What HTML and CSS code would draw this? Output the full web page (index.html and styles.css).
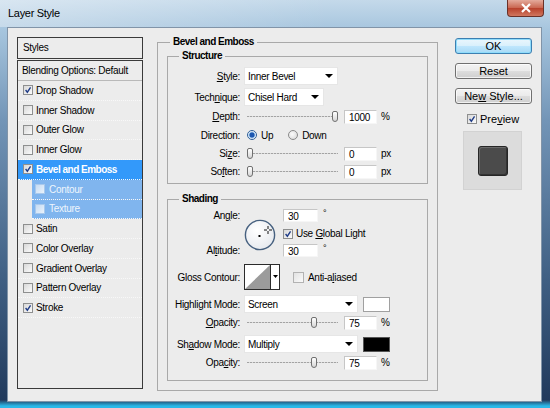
FILE: index.html
```html
<!DOCTYPE html>
<html lang="en">
<head>
  <meta charset="UTF-8">
  <title>Layer Style</title>
  <link rel="stylesheet" href="styles.css">
</head>
<body>

<div class="window">
  <div class="titlebar">
    <span class="title">Layer Style</span>
    <span class="close">
      <svg width="12" height="10" viewBox="0 0 12 10"><path d="M2 1 L10 9 M10 1 L2 9" stroke="#fff" stroke-width="2.2"/></svg>
    </span>
  </div>

  <div class="client">

    <!-- Styles list -->
    <div class="styles">
      <div class="styles-head">Styles</div>
      <div class="styles-body">
        <div class="blend">Blending Options: Default</div>
        <div class="item"><span class="cb"><svg viewBox="0 0 10 10"><path d="M2 5 L4.2 7.8 L8.2 1.8"/></svg></span>Drop Shadow</div>
        <div class="item"><span class="cb"></span>Inner Shadow</div>
        <div class="item"><span class="cb"></span>Outer Glow</div>
        <div class="item"><span class="cb"></span>Inner Glow</div>
        <div class="item active"><span class="cb"><svg viewBox="0 0 10 10"><path d="M2 5 L4.2 7.8 L8.2 1.8"/></svg></span>Bevel and Emboss</div>
        <div class="item sub"><span class="cb"></span>Contour</div>
        <div class="item sub"><span class="cb"></span>Texture</div>
        <div class="item"><span class="cb"></span>Satin</div>
        <div class="item"><span class="cb"></span>Color Overlay</div>
        <div class="item"><span class="cb"></span>Gradient Overlay</div>
        <div class="item"><span class="cb"></span>Pattern Overlay</div>
        <div class="item"><span class="cb"><svg viewBox="0 0 10 10"><path d="M2 5 L4.2 7.8 L8.2 1.8"/></svg></span>Stroke</div>
      </div>
    </div>

    <!-- Bevel and Emboss -->
    <fieldset class="group main">
      <legend>Bevel and Emboss</legend>

      <fieldset class="group structure">
        <legend>Structure</legend>

        <div class="row tall">
          <label><u>S</u>tyle:</label>
          <div class="select w94"><span>Inner Bevel</span><i class="arrow"></i></div>
        </div>
        <div class="row tall">
          <label>Tech<u>n</u>ique:</label>
          <div class="select w80"><span>Chisel Hard</span><i class="arrow"></i></div>
        </div>
        <div class="row">
          <label><u>D</u>epth:</label>
          <div class="slider"><span class="thumb" style="left:85px"></span></div>
          <span class="num">1000</span><span class="unit">%</span>
        </div>
        <div class="row mid">
          <label>Direction:</label>
          <span class="radio on"></span><span class="opt">Up</span>
          <span class="radio down"></span><span class="opt">Down</span>
        </div>
        <div class="row">
          <label>Si<u>z</u>e:</label>
          <div class="slider"><span class="thumb" style="left:0px"></span></div>
          <span class="num">0</span><span class="unit">px</span>
        </div>
        <div class="row">
          <label>So<u>f</u>ten:</label>
          <div class="slider"><span class="thumb" style="left:0px"></span></div>
          <span class="num">0</span><span class="unit">px</span>
        </div>
      </fieldset>

      <fieldset class="group shading">
        <legend>Shading</legend>

        <div class="angle">
          <label class="a1">An<u>g</u>le:</label>
          <div class="dial">
            <svg width="32" height="32" viewBox="0 0 32 32">
              <defs>
                <radialGradient id="dialfill" cx="0.4" cy="0.35" r="0.7">
                  <stop offset="0" stop-color="#ffffff"/>
                  <stop offset="1" stop-color="#e6e9ee"/>
                </radialGradient>
              </defs>
              <circle cx="16" cy="16" r="14.6" fill="url(#dialfill)" stroke="#46607f" stroke-width="1.4"/>
              <rect x="14.5" y="16" width="2" height="2" fill="#000"/>
              <path d="M24 7 V10 M24 12 V15 M20 11 H23 M25 11 H28" stroke="#111" stroke-width="1"/>
            </svg>
          </div>
          <div class="a-val"><span class="num deg">30</span><sup>°</sup></div>
          <div class="a-check"><span class="cb"><svg viewBox="0 0 10 10"><path d="M2 5 L4.2 7.8 L8.2 1.8"/></svg></span><span>Use <u>G</u>lobal Light</span></div>
          <label class="a3">Al<u>t</u>itude:</label>
          <div class="a-val2"><span class="num deg">30</span><sup>°</sup></div>
        </div>

        <div class="row contour-row">
          <label>Gloss Contour:</label>
          <div class="contour">
            <svg width="36" height="26" viewBox="0 0 36 26">
              <rect x="0.5" y="0.5" width="35" height="25" fill="#fff" stroke="#2b2b2b"/>
              <polygon points="1,25 26,1 26,25" fill="#9b9b9b"/>
              <path d="M26.5 0.5 V25.5" stroke="#2b2b2b"/>
              <polygon points="29,11 34,11 31.5,14" fill="#000"/>
            </svg>
          </div>
          <span class="cb light"></span><span class="opt">Anti-a<u>l</u>iased</span>
        </div>

        <div class="row mode">
          <label>Hi<u>g</u>hlight Mode:</label>
          <div class="select w114"><span>Screen</span><i class="arrow"></i></div>
          <span class="swatch white"></span>
        </div>
        <div class="row">
          <label><u>O</u>pacity:</label>
          <div class="slider"><span class="thumb" style="left:64px"></span></div>
          <span class="num">75</span><span class="unit">%</span>
        </div>
        <div class="row mode">
          <label>Sh<u>a</u>dow Mode:</label>
          <div class="select w114"><span>Multiply</span><i class="arrow"></i></div>
          <span class="swatch black"></span>
        </div>
        <div class="row">
          <label>Opa<u>c</u>ity:</label>
          <div class="slider"><span class="thumb" style="left:64px"></span></div>
          <span class="num">75</span><span class="unit">%</span>
        </div>
      </fieldset>
    </fieldset>

    <!-- Buttons and preview -->
    <div class="side">
      <button class="btn default">OK</button>
      <button class="btn">Reset</button>
      <button class="btn">Ne<u>w</u> Style...</button>
      <div class="preview-check"><span class="cb"><svg viewBox="0 0 10 10"><path d="M2 5 L4.2 7.8 L8.2 1.8"/></svg></span><span>Pre<u>v</u>iew</span></div>
      <div class="preview"><div class="swatch-big"></div></div>
    </div>

  </div>
</div>

</body>
</html>
```

FILE: styles.css
```css
* {
  box-sizing: border-box;
}

body {
  margin: 0;
  background: #3e5e82;
  font-family: "Liberation Sans", Arial, sans-serif;
  font-size: 10px;
  letter-spacing: -0.3px;
  color: #000;
}

u {
  text-decoration: underline;
}

/* window frame */
.window {
  width: 550px;
  height: 408px;
  display: flex;
  flex-direction: column;
  background: linear-gradient(to bottom, #c4d9ea 0, #a6c5de 30px, #7395b7 120px, #3f5f83 280px, #213a5c 400px, #2bb8e8 406px);
}

.titlebar {
  height: 27px;
  display: flex;
  align-items: flex-start;
  justify-content: space-between;
  background: linear-gradient(to right, rgba(255,255,255,0.35), rgba(255,255,255,0) 60%);
}

.title {
  font-size: 11px;
  margin: 7px 0 0 8px;
  color: #000;
}

.close {
  width: 37px;
  height: 17px;
  margin-right: 6px;
  display: flex;
  align-items: center;
  justify-content: center;
  border: 1px solid #6a3128;
  border-top: none;
  border-radius: 0 0 4px 4px;
  background: linear-gradient(#e4aa9b, #c9654f 50%, #b7402b 51%, #d0775f);
}

.client {
  width: 535px;
  height: 375px;
  margin-left: 7px;
  display: flex;
  align-items: flex-start;
  padding-left: 9px;
  background: #ececec;
  border: 1px solid #8194a8;
}

/* styles list */
.styles {
  width: 126px;
  height: 352px;
  margin-top: 9px;
  display: flex;
  flex-direction: column;
}

.styles-head {
  height: 22px;
  border: 1px solid #3a3a3a;
  padding-left: 5px;
  line-height: 20px;
}

.styles-body {
  flex: 1;
  margin-top: 1px;
  border: 1px solid #3a3a3a;
}

.blend {
  height: 20px;
  line-height: 19px;
  padding-left: 4px;
  border-bottom: 1px solid #b9b9b9;
}

.item {
  height: 19.75px;
  display: flex;
  align-items: center;
  padding-left: 5px;
  border-bottom: 1px dotted #f8f8f8;
}

.item .cb {
  margin-right: 3px;
}

.item.active {
  background: #3399fa;
  color: #fff;
  font-weight: bold;
  letter-spacing: -0.5px;
}

.item.sub {
  margin-left: 14px;
  padding-left: 3px;
  background: #80b5ee;
  color: #eef5fd;
}

.item.sub .cb {
  margin-right: 4px;
  border-color: #a9c9ec;
  background: linear-gradient(135deg, #c6dcf3, #e9f2fb);
}

/* checkbox */
.cb {
  width: 10px;
  height: 10px;
  flex: none;
  display: inline-flex;
  border: 1px solid #8e8f8f;
  background: linear-gradient(135deg, #d8d8d8, #fbfbfb);
}

.cb svg {
  width: 8px;
  height: 8px;
}

.cb path {
  fill: none;
  stroke: #1e3b86;
  stroke-width: 1.7;
}

.cb.light {
  width: 11px;
  height: 11px;
  border-color: #b2b2b2;
  background: linear-gradient(135deg, #e2e2e2, #fafafa);
}

/* group boxes */
.group {
  margin: 0;
  border: 1px solid #a9a9a9;
}

.group legend {
  font-weight: bold;
  letter-spacing: -0.5px;
  line-height: 12px;
  padding: 0 3px;
}

.main {
  width: 281px;
  height: 355px;
  margin-top: 8px;
  margin-left: 14px;
  padding: 2px 9px 0 9px;
}

.main > legend {
  margin-left: 3px;
}

.structure,
.shading {
  padding: 5px 0 4px 0;
  display: flex;
  flex-direction: column;
  gap: 3px;
}

.structure > legend,
.shading > legend {
  margin-left: 11px;
}

.shading {
  margin-top: 9px;
  padding-top: 4px;
  padding-bottom: 10px;
  gap: 0;
}

.row {
  height: 15px;
  display: flex;
  align-items: center;
}

.row.tall {
  height: 18px;
}

.row.mid {
  height: 16px;
}

.row label,
.angle label {
  width: 72px;
  margin-right: 4px;
  text-align: right;
  flex: none;
}

/* dropdowns */
.select {
  height: 18px;
  display: flex;
  align-items: center;
  justify-content: space-between;
  padding: 0 4px 0 3px;
  background: #fff;
  border: 1px solid #e6e6e6;
}

.w94 { width: 94px; }
.w80 { width: 80px; }
.w114 { width: 114px; }

.arrow {
  width: 0;
  height: 0;
  border-left: 4px solid transparent;
  border-right: 4px solid transparent;
  border-top: 4px solid #000;
}

/* sliders and number fields */
.slider {
  position: relative;
  width: 91px;
  height: 11px;
  margin-left: 3px;
}

.slider::before {
  content: "";
  position: absolute;
  left: 0;
  right: 0;
  top: 5px;
  height: 1px;
  background: repeating-linear-gradient(to right, #a3a3a3 0 2px, #dadada 2px 3px);
}

.thumb {
  position: absolute;
  top: 0;
  width: 6px;
  height: 11px;
  border: 1px solid #707070;
  border-radius: 2px 2px 3px 3px;
  background: linear-gradient(#ffffff, #d6d6d6);
}

.num {
  width: 33px;
  height: 14px;
  margin-left: 6px;
  padding-left: 4px;
  line-height: 13px;
  background: #fff;
  border: 1px solid;
  border-color: #c6c6c6 #f6f6f6 #f6f6f6 #c6c6c6;
}

.unit {
  margin-left: 4px;
}

/* radios */
.radio {
  width: 10px;
  height: 10px;
  flex: none;
  border-radius: 50%;
  border: 1px solid #8a8a8a;
  background: radial-gradient(circle at 40% 40%, #fbfbfb, #d5d5d5);
}

.radio.on {
  margin-left: 3px;
  border-color: #2f5f98;
  background: radial-gradient(circle, #1c57b0 0 2.2px, #8fbbe6 2.8px, #ffffff 4px);
}

.radio.down {
  margin-left: 15px;
}

.opt {
  margin-left: 4px;
}

/* shading: angle block */
.angle {
  height: 55px;
  display: grid;
  grid-template-columns: 72px 35px auto;
  grid-template-rows: 14px 1fr 14px;
  column-gap: 4px;
  padding-bottom: 6px;
}

.angle label {
  margin-right: 0;
  line-height: 14px;
}

.a1 { grid-column: 1; grid-row: 1; }
.a3 { grid-column: 1; grid-row: 3; }

.dial {
  grid-column: 2;
  grid-row: 1 / 4;
  align-self: center;
  margin-top: 3px;
  height: 32px;
}

.a-val { grid-column: 3; grid-row: 1; display: flex; }
.a-val2 { grid-column: 3; grid-row: 3; display: flex; }

.num.deg {
  width: 35px;
  height: 13px;
  margin-left: 0;
}

.angle sup {
  margin-left: 5px;
  font-size: 9px;
  line-height: 8px;
}

.a-check {
  grid-column: 3;
  grid-row: 2;
  display: flex;
  align-items: center;
}

.a-check .cb {
  margin-right: 3px;
}

.contour-row {
  height: 26px;
}

.contour {
  height: 26px;
}

.contour-row .cb {
  margin-left: 13px;
}

.row.mode {
  height: 22px;
  margin-top: 3px;
}

.swatch {
  width: 27px;
  height: 15px;
  margin-left: 5px;
  border: 1px solid #a0a0a0;
}

.swatch.white { background: #fff; }
.swatch.black { background: #000; border-color: #555; }

/* right column */
.side {
  width: 77px;
  margin: 10px 0 0 17px;
  display: flex;
  flex-direction: column;
}

.btn {
  height: 16px;
  margin-bottom: 9px;
  padding: 0;
  font-family: "Liberation Sans", Arial, sans-serif;
  font-size: 11px;
  letter-spacing: 0;
  color: #000;
  line-height: 14px;
  border: 1px solid #707070;
  border-radius: 3px;
  background: linear-gradient(#f3f3f3, #ebebeb 48%, #dddddd 52%, #cfcfcf);
  box-shadow: inset 0 0 0 1px rgba(255,255,255,0.7);
}

.btn.default {
  border-color: #3c7fb1;
  background: linear-gradient(#eaf6fd, #d9f0fc 48%, #bee6fd 52%, #a7d9f5);
  box-shadow: inset 0 0 0 1px #8fdcfb;
}

.preview-check {
  height: 14px;
  display: flex;
  align-items: center;
  margin: -1px 0 0 12px;
  font-size: 11px;
  letter-spacing: 0;
}

.preview-check .cb {
  margin-right: 3px;
}

.preview {
  width: 59px;
  height: 59px;
  margin: 5px 0 0 8px;
  display: flex;
  align-items: center;
  justify-content: center;
  background: #dcdcdc;
  border: 1px solid #d2d2d2;
}

.swatch-big {
  width: 30px;
  height: 30px;
  border: 1px solid #262626;
  border-radius: 3px;
  background: #4b4b4b;
  box-shadow: inset 1px 1px 0 #6a6a6a, inset -1px -1px 0 #333;
}
```
